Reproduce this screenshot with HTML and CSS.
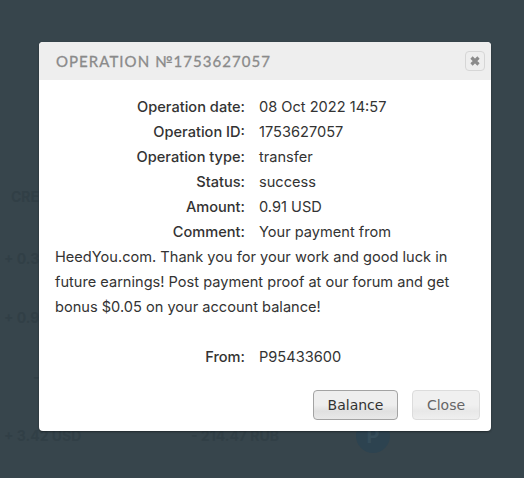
FILE: index.html
```html
<!DOCTYPE html>
<html lang="en">
<head>
    <meta charset="UTF-8">
    <title>Operation</title>
    <link rel="stylesheet" href="styles.css">
</head>
<body>
<div class="page">
    <div class="history-head">CREDIT</div>
    <div class="history-row">+ 0.33 USD</div>
    <div class="history-row">+ 0.91 USD</div>
    <div class="history-row history-dash">-</div>
    <div class="history-row history-last">
        <span class="history-sum">+ 3.42 USD</span>
        <span class="history-rub">- 214.47 RUB</span>
        <span class="history-icon">P</span>
    </div>
</div>
<div class="overlay">
    <div class="modal">
        <div class="modal-header">
            <h3>Operation №1753627057</h3>
            <button class="modal-x" aria-label="Close">
                <svg width="12" height="12" viewBox="0 0 12 12"><path d="M2.5 2.5l7 7M9.5 2.5l-7 7" stroke="#8b8b8b" stroke-width="3.2"/></svg>
            </button>
        </div>
        <div class="modal-body">
            <dl class="details">
                <dt>Operation date:</dt>
                <dd>08 Oct 2022 14:57</dd>
                <dt>Operation ID:</dt>
                <dd>1753627057</dd>
                <dt>Operation type:</dt>
                <dd>transfer</dd>
                <dt>Status:</dt>
                <dd>success</dd>
                <dt>Amount:</dt>
                <dd>0.91 USD</dd>
                <dt>Comment:</dt>
                <dd class="comment">Your payment from HeedYou.com. Thank you for your work and good luck in future earnings! Post payment proof at our forum and get bonus $0.05 on your account balance!</dd>
                <dt>From:</dt>
                <dd>P95433600</dd>
            </dl>
        </div>
        <div class="modal-footer">
            <button class="btn btn-main">Balance</button>
            <button class="btn btn-close">Close</button>
        </div>
    </div>
</div>
</body>
</html>
```

FILE: styles.css
```css
html, body {
    height: 100%;
}
body {
    margin: 0;
    padding: 0;
    background-color: #37454c;
    font-family: "Inter", "Liberation Sans", sans-serif;
    overflow: hidden;
    position: relative;
}
.page {
    padding: 186px 0 0 4px;
    color: #313f46;
    font-size: 14px;
    font-weight: 700;
}
.history-head {
    height: 58px;
    padding-left: 7px;
    line-height: 22px;
}
.history-row {
    height: 59px;
    line-height: 30px;
}
.history-dash {
    padding-left: 29px;
}
.history-last {
    display: flex;
    align-items: center;
    height: 44px;
    margin-top: -7px;
}
.history-sum {
    width: 187px;
}
.history-rub {
    width: 165px;
}
.history-icon {
    width: 34px;
    height: 34px;
    border-radius: 50%;
    background-color: #2d4350;
    color: #364d5a;
    font-size: 20px;
    line-height: 34px;
    text-align: center;
}
.overlay {
    position: absolute;
    top: 42px;
    left: 39px;
}
.modal {
    width: 452px;
    height: 389px;
    display: flex;
    flex-direction: column;
    background-color: #fff;
    border-radius: 4px;
    overflow: hidden;
    box-shadow: 0 1px 2px rgba(0, 0, 0, 0.4);
}
.modal-header {
    height: 38px;
    flex: none;
    display: flex;
    align-items: center;
    justify-content: space-between;
    padding: 0 6px 0 17px;
    background-color: #eeeeee;
}
.modal-header h3 {
    margin: 0;
    font-family: "Lato", sans-serif;
    font-size: 15px;
    font-weight: 400;
    letter-spacing: 1.05px;
    text-transform: uppercase;
    color: #8a8a8a;
    -webkit-text-stroke: 0.3px #8a8a8a;
}
.modal-x {
    width: 20px;
    height: 20px;
    padding: 0;
    display: flex;
    align-items: center;
    justify-content: center;
    background-color: #eeeeee;
    border: 1px solid #d6d6d6;
    border-radius: 4px;
}
.modal-body {
    flex: 1;
    padding: 15px 16px 0;
    font-size: 14.6px;
    line-height: 25px;
    color: #333;
}
.details {
    margin: 0;
}
.details dt {
    float: left;
    clear: left;
    width: 190px;
    margin-right: 14px;
    text-align: right;
    font-weight: 500;
}
.details dd {
    margin: 0;
}
.details .comment {
    margin-bottom: 25px;
}
.modal-footer {
    display: flex;
    justify-content: flex-end;
    gap: 14px;
    padding: 0 11px 11px;
}
.btn {
    height: 30px;
    padding: 0;
    font-family: "DejaVu Sans", sans-serif;
    font-size: 14px;
    border-radius: 4px;
}
.btn-main {
    width: 85px;
    color: #333;
    border: 1px solid #a3a3a3;
    background: linear-gradient(#eeeeee 0%, #eeeeee 50%, #e0e0e0 72%, #e8e8e8 100%);
}
.btn-close {
    width: 68px;
    color: #666;
    border: 1px solid #dcdcdc;
    background: linear-gradient(#f0f0f0 0%, #f0f0f0 50%, #e8e8e8 72%, #efefef 100%);
}
```
